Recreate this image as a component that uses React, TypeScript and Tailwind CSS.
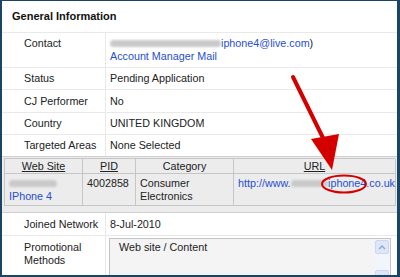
import React from "react";

const font = { fontFamily: '"Liberation Sans", Arial, sans-serif' };

function Blur({ w }: { w: number }) {
  return (
    <span
      className="inline-block h-[7px] rounded-full bg-[#c9c9c9] blur-[1px] align-middle"
      style={{ width: w }}
    />
  );
}

function Row({
  label,
  children,
  h,
  top = false,
}: {
  label: React.ReactNode;
  children: React.ReactNode;
  h: string;
  top?: boolean;
}) {
  return (
    <div className={`flex border-b border-[#e9e9e9] ${h}`}>
      <div
        className={`w-[104px] shrink-0 border-r border-[#e9e9e9] pl-[22px] flex ${
          top ? "items-start pt-[4px]" : "items-center"
        }`}
      >
        <div>{label}</div>
      </div>
      <div className={`flex-1 pl-[4px] flex ${top ? "items-start pt-[4px]" : "items-center"}`}>
        <div>{children}</div>
      </div>
    </div>
  );
}

export default function App() {
  return (
    <div
      className="relative w-[400px] h-[277px] overflow-hidden bg-white border-l-2 border-t border-r-[3px] border-b-2 border-[#1b4565] text-[10.75px] leading-[13px] text-[#222]"
      style={font}
    >
      <div className="h-[32px] border-b border-[#e9e9e9] flex items-center pl-[10px] font-bold text-[11px] text-[#111]">
        General Information
      </div>

      <Row label="Contact" h="h-[35px]" top>
        <div className="flex items-center">
          <Blur w={111} />
          <span className="text-[#1f4fd0]">iphone4@live.com</span>
          <span>)</span>
        </div>
        <div className="text-[#1f4fd0]">Account Manager Mail</div>
      </Row>
      <Row label="Status" h="h-[22px]">
        Pending Application
      </Row>
      <Row label="CJ Performer" h="h-[23px]">
        No
      </Row>
      <Row label="Country" h="h-[22px]">
        UNITED KINGDOM
      </Row>
      <div className="flex h-[21px]">
        <div className="w-[104px] shrink-0 border-r border-[#e9e9e9] pl-[22px] flex items-center">
          Targeted Areas
        </div>
        <div className="flex-1 pl-[4px] flex items-center">None Selected</div>
      </div>

      <div className="border-y border-[#cfcfcf] bg-[#ececec] px-[2px] pt-[1px] pb-[6px]">
        <div className="grid grid-cols-[78px_53px_98px_162px] border-t border-l border-[#c6c6c6]">
          <div className="h-[15px] border-r border-b border-[#c6c6c6] flex items-center justify-center underline">
            Web Site
          </div>
          <div className="h-[15px] border-r border-b border-[#c6c6c6] flex items-center justify-center underline">
            PID
          </div>
          <div className="h-[15px] border-r border-b border-[#c6c6c6] flex items-center justify-center">
            Category
          </div>
          <div className="h-[15px] border-r border-b border-[#c6c6c6] flex items-center justify-center underline">
            URL
          </div>

          <div className="h-[32px] border-r border-b border-[#c6c6c6] pl-[4px] pt-[3px]">
            <div className="h-[13px] flex items-center">
              <Blur w={48} />
            </div>
            <div className="text-[#1f4fd0]">IPhone 4</div>
          </div>
          <div className="h-[32px] border-r border-b border-[#c6c6c6] pl-[4px] pt-[3px]">4002858</div>
          <div className="h-[32px] border-r border-b border-[#c6c6c6] pl-[4px] pt-[3px]">
            <div>Consumer</div>
            <div>Electronics</div>
          </div>
          <div className="h-[32px] border-r border-b border-[#c6c6c6] pl-[4px] pt-[3px] text-[#1f4fd0] whitespace-nowrap">
            <div className="flex items-center">
              <span>http://www.</span>
              <Blur w={40} />
              <span>iphone4.co.uk</span>
            </div>
          </div>
        </div>
      </div>

      <Row label="Joined Network" h="h-[23px]">
        8-Jul-2010
      </Row>
      <div className="flex h-[60px]">
        <div className="w-[104px] shrink-0 border-r border-[#e9e9e9] pl-[22px] pt-[5px]">
          <div>Promotional</div>
          <div>Methods</div>
        </div>
        <div className="flex-1 pl-[3px] pt-[2px]">
          <div className="relative w-[282px] h-[60px] border border-[#c4c4c4] bg-[#f4f4f4] flex">
            <div className="flex-1 pl-[9px] pt-[2px]">Web site / Content</div>
            <div className="w-[14px] mr-[1px] bg-[#f2f5fb] flex flex-col justify-between py-[1px]">
              <div className="h-[14px] rounded-[2px] border border-[#c9d7f1] bg-[#dde7f8] flex items-center justify-center">
                <svg width="8" height="6" viewBox="0 0 8 6">
                  <path d="M1 5 L4 2 L7 5" fill="none" stroke="#8aa4d6" strokeWidth="1.4" />
                </svg>
              </div>
              <div className="h-[14px] mb-[12px] rounded-[2px] border border-[#c9d7f1] bg-[#dde7f8] flex items-center justify-center">
                <svg width="8" height="6" viewBox="0 0 8 6">
                  <path d="M1 1 L4 4 L7 1" fill="none" stroke="#8aa4d6" strokeWidth="1.4" />
                </svg>
              </div>
            </div>
          </div>
        </div>
      </div>

      <svg
        className="absolute left-[-2px] top-[-1px] pointer-events-none"
        width="400"
        height="277"
        viewBox="0 0 400 277"
      >
        <line x1="293" y1="77" x2="326" y2="144" stroke="#d40000" strokeWidth="4" strokeLinecap="round" />
        <polygon points="311,139 339,134 332,170" fill="#d40000" />
        <ellipse cx="344" cy="184" rx="22" ry="8.5" fill="none" stroke="#d40000" strokeWidth="2" />
      </svg>
    </div>
  );
}
